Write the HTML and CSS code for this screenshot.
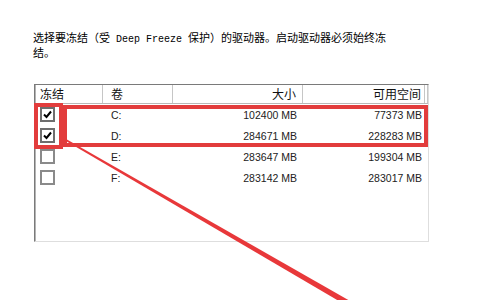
FILE: index.html
```html
<!DOCTYPE html>
<html lang="zh-CN">
<head>
    <meta charset="UTF-8">
    <title>Deep Freeze 驱动器</title>
    <link rel="stylesheet" href="styles.css">
</head>
<body>
    <div class="page">
        <p class="desc">选择要冻结（受<span class="latin"> Deep Freeze </span>保护）的驱动器。启动驱动器必须始终冻<br>结。</p>

        <div class="list">
            <div class="row head">
                <div class="c-freeze">冻结</div>
                <div class="c-vol">卷</div>
                <div class="c-size">大小</div>
                <div class="c-free">可用空间</div>
                <div class="c-rest"></div>
            </div>
            <div class="row">
                <div class="c-freeze"><span class="box on"><svg viewBox="0 0 11 11" width="11" height="11"><path d="M2 5.5 L4.5 8 L9 2.5" fill="none" stroke="#000" stroke-width="2"/></svg></span></div>
                <div class="c-vol">C:</div>
                <div class="c-size">102400 MB</div>
                <div class="c-free">77373 MB</div>
            </div>
            <div class="row">
                <div class="c-freeze"><span class="box on"><svg viewBox="0 0 11 11" width="11" height="11"><path d="M2 5.5 L4.5 8 L9 2.5" fill="none" stroke="#000" stroke-width="2"/></svg></span></div>
                <div class="c-vol">D:</div>
                <div class="c-size">284671 MB</div>
                <div class="c-free">228283 MB</div>
            </div>
            <div class="row">
                <div class="c-freeze"><span class="box"></span></div>
                <div class="c-vol">E:</div>
                <div class="c-size">283647 MB</div>
                <div class="c-free">199304 MB</div>
            </div>
            <div class="row">
                <div class="c-freeze"><span class="box"></span></div>
                <div class="c-vol">F:</div>
                <div class="c-size">283142 MB</div>
                <div class="c-free">283017 MB</div>
            </div>
        </div>
    </div>

    <!-- 红色标注 -->
    <svg class="marks" width="482" height="300" viewBox="0 0 482 300">
        <rect x="36" y="105" width="25" height="42" fill="none" stroke="#e23c3c" stroke-width="4"/>
        <rect x="65" y="107" width="361" height="38" fill="none" stroke="#e23c3c" stroke-width="4"/>
        <polygon points="66.5,139.2 65.5,140.8 358.5,312.5 361.5,307.5" fill="#e8383a"/>
    </svg>
</body>
</html>
```

FILE: styles.css
```css
body {
    margin: 0;
    background: #fff;
    font-family: "Noto Sans CJK SC", sans-serif;
    color: #000;
}

.page {
    width: 482px;
    height: 300px;
    padding-top: 31px;
    box-sizing: border-box;
}

.desc {
    margin: 0 0 0 33px;
    font-size: 11px;
    line-height: 12px;
    height: 24px;
}

.desc .latin {
    font-family: "Liberation Mono", monospace;
    font-size: 10px;
}

.list {
    margin: 29px 0 0 34px;
    width: 395px;
    height: 158px;
    box-sizing: border-box;
    border: 1px solid;
    border-color: #7a7a7a #dedede #dedede #7a7a7a;
    box-shadow: inset 1px 0 0 #b4b4b4;
}

.row {
    display: flex;
    height: 21px;
    align-items: center;
    font-family: "Liberation Sans", sans-serif;
    font-size: 10.5px;
    color: #222;
}

.row.head {
    height: 18px;
    border-bottom: 1px solid #b8b8b8;
    font-family: "Noto Sans CJK SC", sans-serif;
    font-size: 12px;
    color: #111;
}

.head > div {
    height: 18px;
    line-height: 18px;
    border-right: 1px solid #c6c6c6;
    box-sizing: border-box;
}

.c-freeze {
    width: 68px;
    padding-left: 5px;
    box-sizing: border-box;
    display: flex;
    align-items: center;
}

.c-vol {
    width: 70px;
    padding-left: 8px;
    box-sizing: border-box;
}

.c-size {
    width: 130px;
    padding-right: 6px;
    text-align: right;
    box-sizing: border-box;
}

.c-free {
    width: 122px;
    padding-right: 3px;
    text-align: right;
    box-sizing: border-box;
}

.c-rest {
    width: 3px;
}

.box {
    width: 15px;
    height: 15px;
    box-sizing: border-box;
    border: 2px solid #8a8a8a;
    background: #fff;
    display: flex;
    align-items: center;
    justify-content: center;
}

.box.on {
    border-color: #6e6e6e;
}

.marks {
    position: absolute;
    left: 0;
    top: 0;
    pointer-events: none;
}
```
